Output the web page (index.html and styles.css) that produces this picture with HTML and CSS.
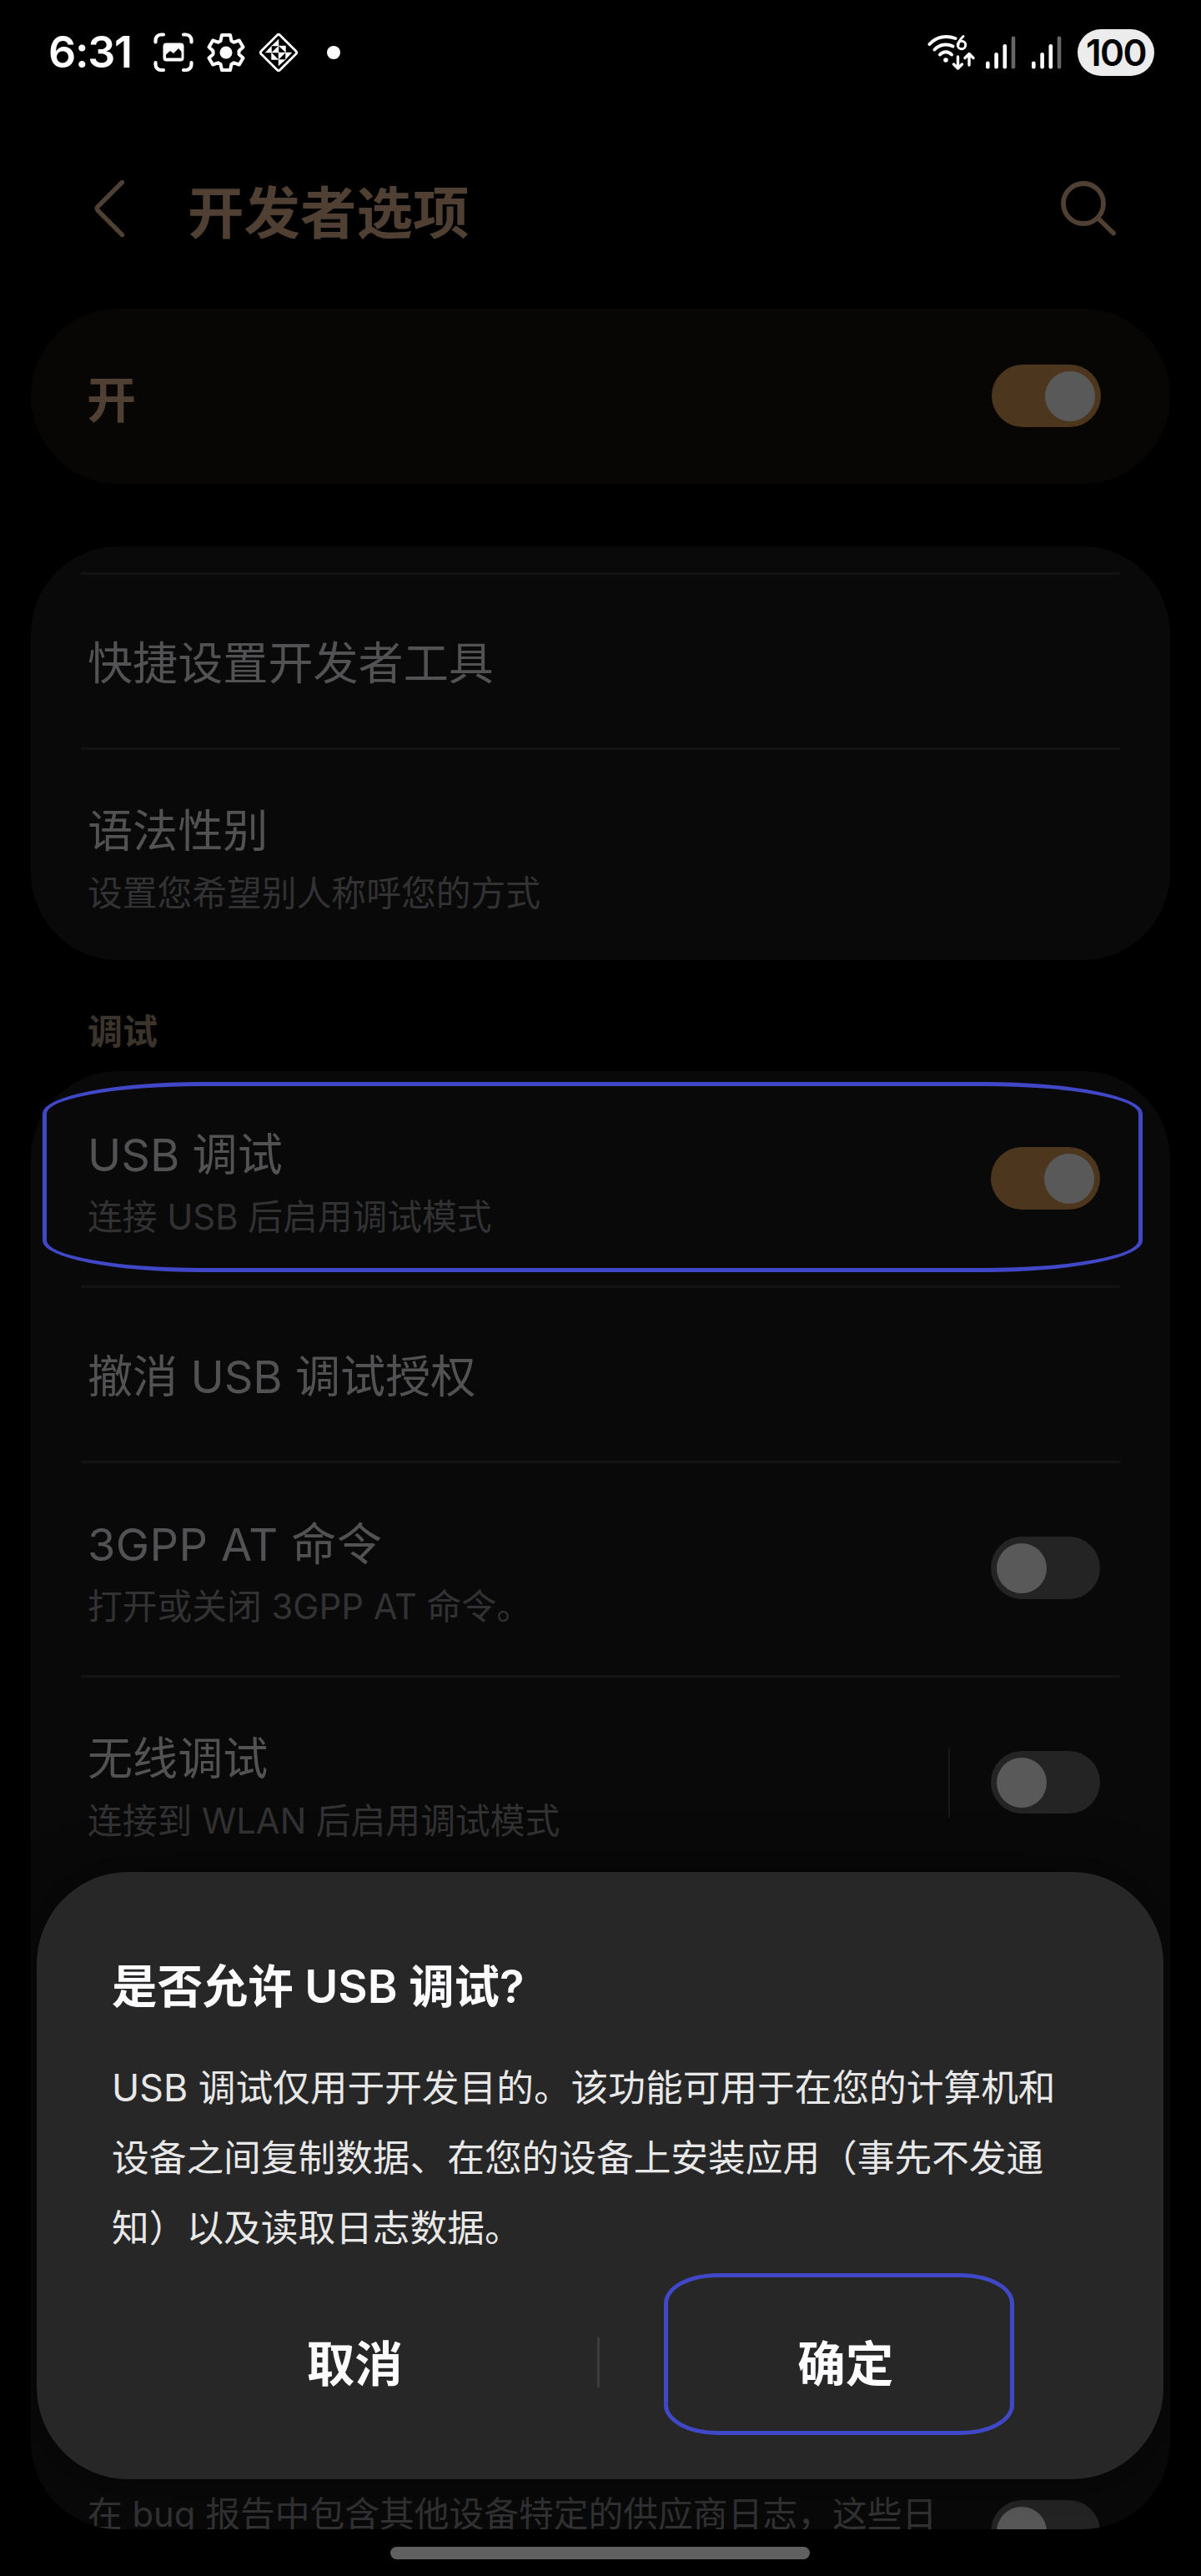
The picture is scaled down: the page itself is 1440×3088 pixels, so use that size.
FILE: index.html
```html
<!DOCTYPE html>
<html lang="zh-CN">
<head>
<meta charset="utf-8">
<title>开发者选项</title>
<link rel="stylesheet" href="styles.css">
</head>
<body>
<div class="phone">
  <header class="status">
    <span class="clock">6:31</span>
    <svg class="ic-scan" width="48" height="48" viewBox="0 0 48 48" fill="none">
      <path d="M2.500 11.500V9a6.500 6.500 0 0 1 6.500-6.500h3M36 2.500h3a6.500 6.500 0 0 1 6.500 6.500v2.500M45.500 36v2.500a6.500 6.500 0 0 1-6.500 6.500h-3M12 45H9a6.500 6.500 0 0 1-6.500-6.500V36" stroke="#fff" stroke-width="4.200" stroke-linecap="round"/>
      <rect x="11.500" y="12.500" width="25" height="22" rx="4" fill="#fff"/>
      <path d="M15 30.500v-4l5-4.500 4 3 6-6 3.500 4v7.500z" fill="#000"/>
    </svg>
    <svg class="ic-gear" width="46" height="48" viewBox="0 0 46 48" fill="none">
      <path d="M18 3h10l1.500 7 3 1.700 6.300-2.200 4.700 8-5 4.500v4l5 4.500-4.700 8-6.300-2.200-3 1.700-1.500 7H18l-1.500-7-3-1.700-6.300 2.200-4.700-8 5-4.500v-4l-5-4.500 4.700-8 6.300 2.200 3-1.700z" stroke="#fff" stroke-width="4" stroke-linejoin="round"/>
      <circle cx="23" cy="24" r="7.500" fill="#fff"/>
    </svg>
    <svg class="ic-diamond" width="50" height="50" viewBox="0 0 50 50" fill="none">
      <rect x="9" y="9" width="32" height="32" rx="2.500" transform="rotate(45 25 25)" stroke="#fff" stroke-width="2.800"/>
      <path d="M16.500 17h17v16.500h-17zM25 9v32M9 25h32" stroke="#aaa" stroke-width=".7"/>
      <path d="M25 9v8h-8.500zM9 25l7.500-8v8zM33.500 25H41l-7.500 8.500zM25 33.500h8.500L25 41zM25 17v8h-8.500zM25 17h8.500v8zM16.500 25v8.500H25zM25 25h8.500L25 33.500z" fill="#fff"/>
    </svg>
    <span class="dot"></span>
    <span class="grow"></span>
    <svg class="ic-wifi" width="58" height="44" viewBox="0 0 58 44" fill="none" stroke="#fff" stroke-linecap="round">
      <path d="M2.500 12C11 2.500 23 1 33.500 5" stroke-width="4"/>
      <path d="M8.500 18.500c6-6.500 15-7.500 22-4" stroke-width="4"/>
      <path d="M15 24.500c4-4.500 10-4.500 14 0" stroke-width="4"/>
      <circle cx="22" cy="31" r="2.800" fill="#fff" stroke="none"/>
      <path d="M43 2.500c-4 4-6 8-6 10.500" stroke-width="3"/>
      <circle cx="41" cy="13" r="4.700" stroke-width="3"/>
      <path d="M36.500 27v13M31.500 36l5 5 5-5M50 37V24M45 28.500l5-5 5 5" stroke-width="3.400" stroke-linejoin="round"/>
    </svg>
    <svg class="ic-signal" width="36" height="40" viewBox="0 0 36 40" fill="#fff">
      <rect x="0" y="30.500" width="4.600" height="9" rx="2.300"/><rect x="10.300" y="20" width="4.600" height="19.500" rx="2.300"/><rect x="20.500" y="10" width="4.600" height="29.500" rx="2.300"/><rect x="30.700" y="0.500" width="4.600" height="39" rx="2.300" fill="#666"/>
    </svg>
    <svg class="ic-signal" width="36" height="40" viewBox="0 0 36 40" fill="#fff">
      <rect x="0" y="30.500" width="4.600" height="9" rx="2.300"/><rect x="10.300" y="20" width="4.600" height="19.500" rx="2.300"/><rect x="20.500" y="10" width="4.600" height="29.500" rx="2.300"/><rect x="30.700" y="0.500" width="4.600" height="39" rx="2.300" fill="#666"/>
    </svg>
    <span class="battery">100</span>
  </header>

  <nav class="appbar">
    <svg class="ic-back" width="36" height="70" viewBox="0 0 36 70" fill="none">
      <path d="M33.500 3.500 4.500 32.500q-2.500 2.500 0 5L33.500 66.500" stroke="#4f4033" stroke-width="5.400" stroke-linecap="round" stroke-linejoin="round"/>
    </svg>
    <h1>开发者选项</h1>
    <svg class="ic-search" width="68" height="68" viewBox="0 0 68 68" fill="none" stroke="#4f4033">
      <circle cx="27" cy="27" r="24" stroke-width="5.800"/>
      <path d="M45.500 45.500 63 62.500" stroke-width="5.800" stroke-linecap="round"/>
    </svg>
  </nav>

  <section class="card master">
    <span class="master-label">开</span>
    <span class="toggle on"></span>
  </section>

  <section class="card general">
    <div class="item single"><div class="text"><p class="name">快捷设置开发者工具</p></div></div>
    <div class="item"><div class="text"><p class="name">语法性别</p><p class="desc">设置您希望别人称呼您的方式</p></div></div>
  </section>

  <h2 class="section">调试</h2>

  <section class="card debug">
    <div class="item first">
      <div class="text"><p class="name">USB 调试</p><p class="desc">连接 USB 后启用调试模式</p></div>
      <span class="toggle on"></span>
      <span class="mark mark-row"></span>
    </div>
    <div class="item single"><div class="text"><p class="name">撤消 USB 调试授权</p></div></div>
    <div class="item">
      <div class="text"><p class="name wide">3GPP AT 命令</p><p class="desc">打开或关闭 3GPP AT 命令。</p></div>
      <span class="toggle"></span>
    </div>
    <div class="item">
      <div class="text"><p class="name">无线调试</p><p class="desc">连接到 WLAN 后启用调试模式</p></div>
      <span class="split"></span>
      <span class="toggle"></span>
    </div>
    <div class="item last">
      <div class="text"><p class="desc">在 bug 报告中包含其他设备特定的供应商日志，这些日</p></div>
      <span class="toggle"></span>
    </div>
  </section>

  <div class="home"></div>

  <div class="dialog">
    <h3>是否允许 USB 调试?</h3>
    <p class="message">USB 调试仅用于开发目的。该功能可用于在您的计算机和<br>设备之间复制数据、在您的设备上安装应用（事先不发通<br>知）以及读取日志数据。</p>
    <div class="actions">
      <span class="button">取消</span>
      <span class="bar"></span>
      <span class="button">确定<span class="mark mark-ok"></span></span>
    </div>
  </div>
</div>
</body>
</html>
```
FILE: styles.css
```css
* { box-sizing: border-box; margin: 0; padding: 0; }

body {
  background: #000;
  font-family: "Inter", "Noto Sans CJK SC", sans-serif;
  font-weight: 400;
}

.phone {
  position: relative;
  display: flex;
  flex-direction: column;
  width: 1440px;
  height: 3088px;
  overflow: hidden;
  background: #000;
}

/* Status bar */
.status {
  display: flex;
  align-items: center;
  height: 126px;
  padding: 0 56px 0 58px;
  color: #fff;
}
.clock { width: 126px; font-size: 52px; font-weight: 600; line-height: 60px; letter-spacing: -1.300px; white-space: nowrap; }
.ic-gear { margin-left: 16px; }
.ic-diamond { margin-left: 15px; }
.dot { width: 16px; height: 16px; margin-left: 33px; border-radius: 50%; background: #fff; }
.grow { flex: 1; }
.ic-wifi { margin-right: 12px; }
.ic-signal { margin-right: 19px; }
.battery {
  width: 92px;
  height: 56px;
  border-radius: 28px;
  background: #ececec;
  color: #000;
  font-size: 44px;
  font-weight: 600;
  line-height: 57px;
  text-align: center;
  letter-spacing: -1.500px;
}

/* App bar */
.appbar {
  display: flex;
  align-items: center;
  height: 244px;
  padding: 4px 100px 0 113px;
}
.appbar h1 {
  flex: 1;
  margin-left: 76px;
  padding-top: 12px;
  color: #4f4033;
  font-size: 67.500px;
  font-weight: 600;
  line-height: 80px;
}
.ic-search { margin-top: 2px; }

/* Cards */
.card {
  flex: none;
  margin: 0 37px;
  border-radius: 105px;
  background: #090909;
  overflow: hidden;
}
.master {
  display: flex;
  align-items: center;
  justify-content: space-between;
  height: 210px;
  padding: 0 83px 0 67px;
  background: #070604;
}
.master-label { padding-top: 10px; color: #4f4033; font-size: 59px; font-weight: 600; line-height: 72px; }
.master .toggle { margin-top: -1px; }
.general { height: 496px; margin-top: 75px; padding-top: 31px; }
.section {
  height: 133px;
  padding: 58px 0 0 105px;
  color: #3b342d;
  font-size: 42px;
  font-weight: 600;
  line-height: 56px;
}
.debug { height: 1748px; }

.item {
  display: flex;
  align-items: center;
  height: 257px;
  margin: 0 60px;
  padding: 0 24px 0 8px;
  border-top: 3px solid #141414;
}
.item.first { border-top-color: transparent; }
.item.single { height: 210px; }
.item .text { flex: 1; padding-top: 7px; }
.item.single .text { padding: 7px 0 0; }
.name { color: #525254; font-size: 54.100px; line-height: 72px; white-space: nowrap; }
.name.wide { letter-spacing: .4px; }
.desc { margin-top: 10px; color: #323234; font-size: 41.780px; line-height: 56px; white-space: nowrap; }
.item.last { height: 820px; border-top: 0; align-items: flex-end; padding-bottom: 12px; }
.item.last .text { padding-bottom: 31px; }
.item.last .toggle { margin-bottom: 1px; }

.split { width: 2px; height: 83px; margin: -3px 49px 0 0; background: #181818; }

.toggle {
  flex: none;
  display: flex;
  align-items: center;
  width: 131px;
  height: 75px;
  padding: 0 7px;
  border-radius: 38px;
  background: #242424;
}
.item .toggle { margin-top: -3px; }
.toggle::before { content: ""; width: 60px; height: 60px; border-radius: 50%; background: #595959; }
.toggle.on { justify-content: flex-end; background: #4d361e; }

/* Gesture bar */
.home {
  width: 503px;
  height: 15px;
  margin: 21px 0 0 468px;
  border-radius: 8px;
  background: #606060;
}

/* Confirmation dialog */
.dialog {
  position: absolute;
  left: 44px;
  top: 2244px;
  width: 1351px;
  height: 728px;
  padding: 99px 88px 0 90px;
  border-radius: 110px;
  background: #272727;
  box-shadow: 0 0 60px rgba(0, 0, 0, .5);
}
.dialog h3 { color: #fcfcff; font-size: 54.400px; font-weight: 600; line-height: 76px; white-space: nowrap; }
.message { margin-top: 42px; color: #e8e8e8; font-size: 44.700px; line-height: 84px; white-space: nowrap; }
.actions { display: flex; align-items: center; margin: 73px 0 0 -1px; }
.button {
  position: relative;
  flex: 1;
  color: #fcfcff;
  font-size: 57.500px;
  font-weight: 600;
  line-height: 96px;
  text-align: center;
}
.button:last-child { padding-right: 1px; }
.bar { width: 3px; height: 60px; margin: -4px 3px 0 -2px; background: #3c3c3c; }

/* Blue outlines pointing out the row and the button to tap */
.mark { position: absolute; border: 5px solid #4148c8; }
.mark-row { left: 51px; top: 1297px; width: 1319px; height: 228px; border-radius: 190px / 38px; }
.mark-ok { left: 74px; top: -61px; width: 420px; height: 194px; border-radius: 64px / 36px; }
```
